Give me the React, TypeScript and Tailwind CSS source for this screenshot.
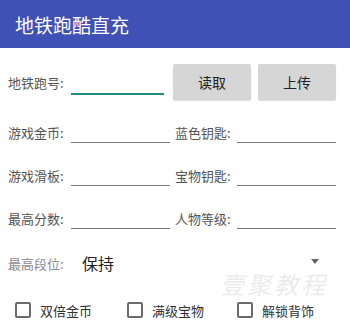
import React from "react";

const font = "font-['Noto_Sans_CJK_SC','Noto_Sans',sans-serif]";

function Field({ label, labelW, lineW }: { label: string; labelW: string; lineW: string }) {
  return (
    <div className="flex items-stretch h-[22px]">
      <div className={`${labelW} flex items-center text-[13px] text-[#555555] leading-none`}>{label}</div>
      <div className={`${lineW} border-b border-[#7a7a7a]`} />
    </div>
  );
}

function Check({ label, w }: { label: string; w: string }) {
  return (
    <div className={`${w} flex items-center`}>
      <div className="w-[16px] h-[16px] border-2 border-[#6b6b6b] rounded-[2px] bg-white" />
      <span className="ml-[9px] text-[13px] text-[#333333] leading-none">{label}</span>
    </div>
  );
}

export default function App() {
  return (
    <div className={`w-[350px] h-[324px] bg-white relative overflow-hidden ${font}`}>
      <div className="h-[48px] bg-[#3f51b5] flex items-center pl-[15px] text-white text-[19px] leading-none">
        地铁跑酷直充
      </div>

      <div className="flex items-start pt-[16px] h-[52px]">
        <div className="w-[63px] ml-[8px] h-[36px] flex items-center text-[13px] text-[#555555] leading-none">地铁跑号:</div>
        <div className="w-[93px] h-[31px] border-b-2 border-[#238b80]" />
        <div className="ml-[9px] w-[78px] h-[36px] rounded-[2px] bg-[#d6d6d6] shadow-[0_1px_1px_rgba(0,0,0,0.15)] flex items-center justify-center text-[14px] text-[#222222] leading-none">读取</div>
        <div className="ml-[7px] w-[78px] h-[36px] rounded-[2px] bg-[#d6d6d6] shadow-[0_1px_1px_rgba(0,0,0,0.15)] flex items-center justify-center text-[14px] text-[#222222] leading-none">上传</div>
      </div>

      {[
        ["游戏金币:", "蓝色钥匙:"],
        ["游戏滑板:", "宝物钥匙:"],
        ["最高分数:", "人物等级:"],
      ].map(([a, b]) => (
        <div key={a} className="h-[43px] flex items-end">
          <div className="ml-[8px]">
            <Field label={a} labelW="w-[63px]" lineW="w-[99px]" />
          </div>
          <div className="ml-[5px]">
            <Field label={b} labelW="w-[62px]" lineW="w-[99px]" />
          </div>
        </div>
      ))}

      <div className="mt-[14px] h-[40px] flex items-center">
        <div className="ml-[8px] w-[74px] text-[13px] text-[#8a8a8a] leading-none">最高段位:</div>
        <div className="text-[16px] text-[#222222] leading-none">保持</div>
        <div className="ml-auto mr-[31px] -mt-[4px] w-0 h-0 border-l-[4px] border-r-[4px] border-t-[5px] border-l-transparent border-r-transparent border-t-[#666666]" />
      </div>

      <div className="mt-[19px] h-[16px] flex items-center pl-[15px]">
        <Check label="双倍金币" w="w-[112px]" />
        <Check label="满级宝物" w="w-[110px]" />
        <Check label="解锁背饰" w="w-[100px]" />
      </div>

      <div className="absolute left-[220px] top-[272px] pointer-events-none select-none">
        <div className="italic text-[24px] text-[rgba(195,195,195,0.35)] leading-none tracking-[3px]">壹聚教程</div>
      </div>
    </div>
  );
}
